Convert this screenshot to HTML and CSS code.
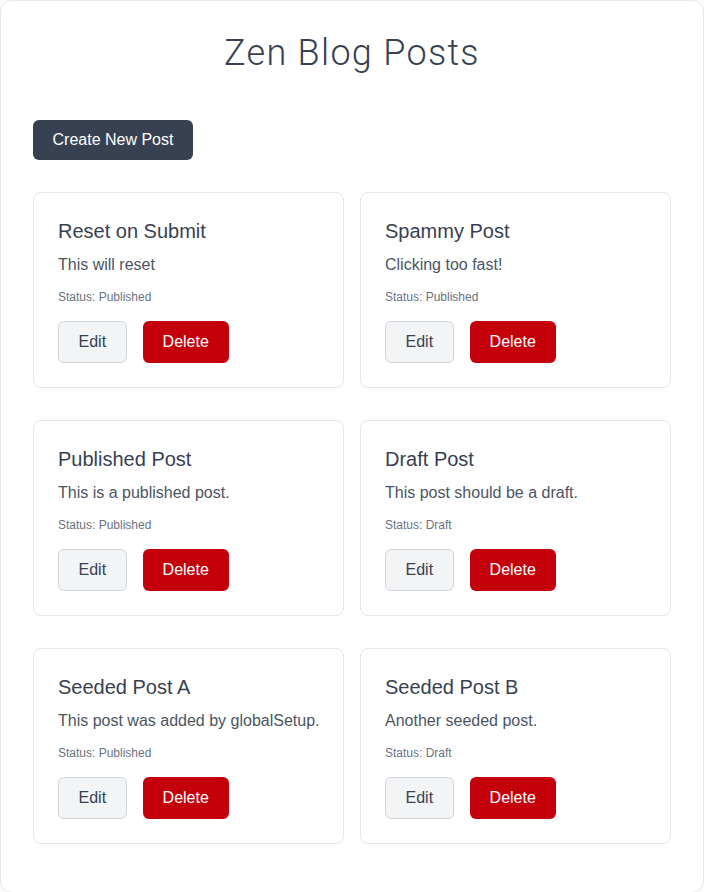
FILE: index.html
```html
<!DOCTYPE html>
<html lang="en">
<head>
<meta charset="utf-8">
<title>Zen Blog Posts</title>
<link rel="stylesheet" href="styles.css">
</head>
<body>
<main class="page">
  <h1 class="page-title">Zen Blog Posts</h1>
  <button class="btn btn-primary">Create New Post</button>
  <section class="post-grid">
    <article class="post-card">
      <h2 class="post-title">Reset on Submit</h2>
      <p class="post-body">This will reset</p>
      <p class="post-status">Status: Published</p>
      <div class="post-actions"><button class="btn btn-edit">Edit</button><button class="btn btn-delete">Delete</button></div>
    </article>
    <article class="post-card">
      <h2 class="post-title">Spammy Post</h2>
      <p class="post-body">Clicking too fast!</p>
      <p class="post-status">Status: Published</p>
      <div class="post-actions"><button class="btn btn-edit">Edit</button><button class="btn btn-delete">Delete</button></div>
    </article>
    <article class="post-card">
      <h2 class="post-title">Published Post</h2>
      <p class="post-body">This is a published post.</p>
      <p class="post-status">Status: Published</p>
      <div class="post-actions"><button class="btn btn-edit">Edit</button><button class="btn btn-delete">Delete</button></div>
    </article>
    <article class="post-card">
      <h2 class="post-title">Draft Post</h2>
      <p class="post-body">This post should be a draft.</p>
      <p class="post-status">Status: Draft</p>
      <div class="post-actions"><button class="btn btn-edit">Edit</button><button class="btn btn-delete">Delete</button></div>
    </article>
    <article class="post-card">
      <h2 class="post-title">Seeded Post A</h2>
      <p class="post-body">This post was added by globalSetup.</p>
      <p class="post-status">Status: Published</p>
      <div class="post-actions"><button class="btn btn-edit">Edit</button><button class="btn btn-delete">Delete</button></div>
    </article>
    <article class="post-card">
      <h2 class="post-title">Seeded Post B</h2>
      <p class="post-body">Another seeded post.</p>
      <p class="post-status">Status: Draft</p>
      <div class="post-actions"><button class="btn btn-edit">Edit</button><button class="btn btn-delete">Delete</button></div>
    </article>
  </section>
</main>
</body>
</html>
```

FILE: styles.css
```css
* { box-sizing: border-box; }
html, body { margin: 0; padding: 0; }
body {
  background: #f9fafb;
  font-family: "Liberation Sans", Arial, sans-serif;
  color: #374151;
}
.page {
  min-height: 892px;
  background: #ffffff;
  border: 1px solid #e5e7eb;
  border-radius: 12px;
  padding: 32px 32px 48px;
  display: flex;
  flex-direction: column;
  align-items: flex-start;
}
.page-title {
  align-self: stretch;
  margin: 0 0 47px;
  text-align: center;
  font-family: Roboto, "Liberation Sans", sans-serif;
  font-weight: 300;
  font-size: 36px;
  line-height: 40px;
  letter-spacing: 1.3px;
  color: #374151;
}
.btn {
  font-family: "Liberation Sans", Arial, sans-serif;
  font-size: 16px;
  line-height: 24px;
  border-radius: 6px;
  cursor: pointer;
}
.btn-primary {
  height: 40px;
  padding: 0 19.5px;
  background: #374151;
  color: #ffffff;
  border: none;
  margin-bottom: 32px;
}
.post-grid {
  align-self: stretch;
  display: grid;
  grid-template-columns: repeat(2, minmax(0, 1fr));
  column-gap: 16px;
  row-gap: 32px;
}
.post-card {
  min-width: 0;
  border: 1px solid #e5e7eb;
  border-radius: 8px;
  padding: 24px;
  background: #ffffff;
}
.post-title {
  margin: 0 0 8px;
  font-size: 20px;
  line-height: 28px;
  font-weight: 400;
  color: #374151;
}
.post-body {
  margin: 0 0 12px;
  font-size: 16px;
  line-height: 24px;
  color: #4b5563;
  white-space: nowrap;
}
.post-status {
  margin: 0 0 16px;
  font-size: 12px;
  line-height: 16px;
  color: #6b7280;
}
.post-actions {
  display: flex;
  gap: 16px;
}
.btn-edit {
  height: 42px;
  padding: 0 19.5px;
  background: #f3f4f6;
  border: 1px solid #d1d5db;
  color: #374151;
}
.btn-delete {
  height: 42px;
  padding: 0 20px;
  background: #c4000a;
  border: none;
  color: #ffffff;
}
```
